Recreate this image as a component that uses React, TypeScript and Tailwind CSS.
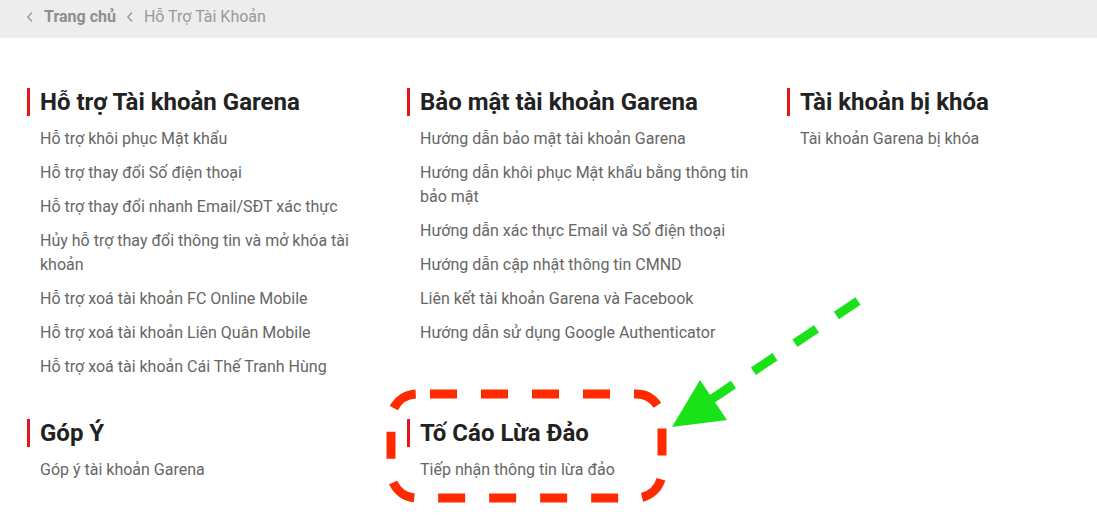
import React from "react";

const Chevron = () => (
  <svg width="8" height="12" viewBox="0 0 8 12" className="shrink-0">
    <path d="M6 1.5 L1.8 6 L6 10.5" fill="none" stroke="#9a9a9a" strokeWidth="1.4" />
  </svg>
);

type Section = { title: string; items: string[] };

const sections: Section[] = [
  {
    title: "Hỗ trợ Tài khoản Garena",
    items: [
      "Hỗ trợ khôi phục Mật khẩu",
      "Hỗ trợ thay đổi Số điện thoại",
      "Hỗ trợ thay đổi nhanh Email/SĐT xác thực",
      "Hủy hỗ trợ thay đổi thông tin và mở khóa tài khoản",
      "Hỗ trợ xoá tài khoản FC Online Mobile",
      "Hỗ trợ xoá tài khoản Liên Quân Mobile",
      "Hỗ trợ xoá tài khoản Cái Thế Tranh Hùng",
    ],
  },
  {
    title: "Bảo mật tài khoản Garena",
    items: [
      "Hướng dẫn bảo mật tài khoản Garena",
      "Hướng dẫn khôi phục Mật khẩu bằng thông tin bảo mật",
      "Hướng dẫn xác thực Email và Số điện thoại",
      "Hướng dẫn cập nhật thông tin CMND",
      "Liên kết tài khoản Garena và Facebook",
      "Hướng dẫn sử dụng Google Authenticator",
    ],
  },
  {
    title: "Tài khoản bị khóa",
    items: ["Tài khoản Garena bị khóa"],
  },
  {
    title: "Góp Ý",
    items: ["Góp ý tài khoản Garena"],
  },
  {
    title: "Tố Cáo Lừa Đảo",
    items: ["Tiếp nhận thông tin lừa đảo"],
  },
];

const SectionBlock = ({ s }: { s: Section }) => (
  <div className="flex flex-col">
    <h2 className="border-l-[3px] border-[#e3171b] pl-[10px] text-[24px] leading-[28px] font-bold text-[#222]">
      {s.title}
    </h2>
    <ul className="mt-[11px] flex flex-col gap-[10px] pl-[13px] pr-[20px]">
      {s.items.map((it) => (
        <li key={it} className="text-[16px] leading-[24px] text-[#666]">
          {it}
        </li>
      ))}
    </ul>
  </div>
);

export default function App() {
  return (
    <div
      className="relative h-[516px] w-[1097px] overflow-hidden bg-white"
      style={{ fontFamily: "Roboto, 'Noto Sans', sans-serif" }}
    >
      <div className="flex h-[38px] items-center gap-[10px] bg-[#ededed] pb-[5px] pl-[26px] text-[16px] text-[#999]">
        <Chevron />
        <span className="font-bold text-[#8e8e8e]">Trang chủ</span>
        <Chevron />
        <span>Hỗ Trợ Tài Khoản</span>
      </div>
      <div className="grid grid-cols-[380px_380px_300px] gap-y-[40px] pl-[27px] pt-[50px]">
        {sections.map((s) => (
          <SectionBlock key={s.title} s={s} />
        ))}
      </div>
      <svg className="pointer-events-none absolute left-0 top-0" width="1097" height="516">
        <rect
          x="391"
          y="394"
          width="271"
          height="104"
          rx="26"
          fill="none"
          stroke="#ff2a00"
          strokeWidth="9"
          strokeDasharray="27 24"
          strokeDashoffset="38"
        />
        <line
          x1="858"
          y1="301"
          x2="712"
          y2="399"
          stroke="#19e219"
          strokeWidth="9"
          strokeDasharray="26 24"
        />
        <polygon points="672,427 700,380 727,420" fill="#19e219" />
      </svg>
    </div>
  );
}
